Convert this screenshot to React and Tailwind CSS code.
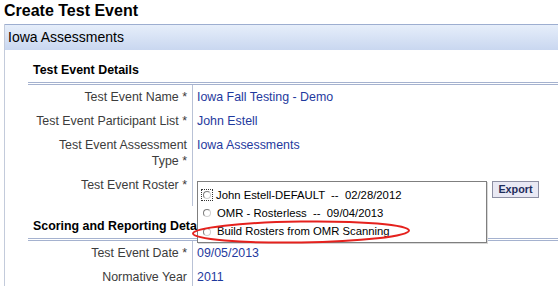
const Row = ({ label, children, valueClass = "" }) => (
  <div className="flex">
    <div className="w-[165px] shrink-0 border-r border-[#b9c2d6] py-1 pr-[5px] text-right leading-4 text-[#3c3c3c]">
      {label}
    </div>
    <div className={"pl-1 py-1 leading-4 text-[#1f3a9e] " + valueClass}>{children}</div>
  </div>
);

const Section = ({ title, children }) => (
  <div>
    <div className="border-b-[3px] border-double border-[#a5b2cf] pb-1 pl-[5px] pt-3 font-bold leading-4 text-black">
      {title}
    </div>
    {children}
  </div>
);

const Radio = ({ focused }) => (
  <span
    className={
      "flex h-[12px] w-[12px] items-center justify-center " +
      (focused ? "border border-dotted border-[#333]" : "")
    }
  >
    <span className="h-[8px] w-[8px] rounded-full border border-t-[#7d7d7d] border-l-[#7d7d7d] border-r-[#d0d0d0] border-b-[#d0d0d0] bg-white" />
  </span>
);

export default function App() {
  return (
    <div className="relative h-[286px] w-[558px] overflow-hidden bg-white font-['Liberation_Sans',Arial,sans-serif] text-[12.4px]">
      <h1 className="h-6 pl-1 pt-[2px] text-[16px] font-bold leading-[18px] text-black">Create Test Event</h1>
      <div className="ml-1 border-l border-[#c3cbdb]">
        <div className="h-[26px] border-t border-[#9daed0] bg-gradient-to-b from-[#e6eefa] to-[#c9d7f0] pl-[3px] text-[14px] leading-[25px] text-black">
          Iowa Assessments
        </div>
        <div className="pl-[23px]">
          <Section title="Test Event Details">
            <Row label="Test Event Name *">Iowa Fall Testing - Demo</Row>
            <Row label="Test Event Participant List *">John Estell</Row>
            <Row label={<>Test Event Assessment<br />Type *</>}>Iowa Assessments</Row>
            <div className="flex h-[33px]">
              <div className="w-[165px] shrink-0 border-r border-[#b9c2d6] py-1 pr-[5px] text-right leading-4 text-[#3c3c3c]">
                Test Event Roster *
              </div>
              <div className="flex items-start gap-[5px] pl-1 pt-2">
                <div className="relative h-[18px] w-[290px]">
                  <div className="absolute left-0 top-0 z-10 h-[62px] w-[290px] border border-[#7f7f7f] bg-white pt-[4px] text-[11.3px] text-black shadow-[1px_1px_0_#d8d8d8]">
                    <div className="flex h-[18px] items-center pl-[3px]">
                      <Radio focused />
                      <span className="ml-[3px] whitespace-pre">John Estell-DEFAULT  --  02/28/2012</span>
                    </div>
                    <div className="flex h-[18px] items-center pl-[3px]">
                      <Radio />
                      <span className="ml-[4px] whitespace-pre">OMR - Rosterless  --  09/04/2013</span>
                    </div>
                    <div className="flex h-[19px] items-center pl-[3px]">
                      <Radio />
                      <span className="ml-[4px] whitespace-pre">Build Rosters from OMR Scanning</span>
                    </div>
                  </div>
                </div>
                <button className="h-[17px] w-[47px] border border-[#8d8fa3] bg-[#e9e9f4] text-[10.8px] font-bold leading-[15px] text-[#1f2d5c]">
                  Export
                </button>
              </div>
            </div>
          </Section>
          <Section title="Scoring and Reporting Details">
            <Row label="Test Event Date *">09/05/2013</Row>
            <Row label="Normative Year">2011</Row>
          </Section>
        </div>
      </div>
      <svg className="absolute left-[189px] top-[218px] z-20" width="224" height="28" viewBox="0 0 224 28">
        <ellipse cx="112" cy="14" rx="108" ry="10.5" fill="none" stroke="#e5211d" strokeWidth="2" transform="rotate(-0.8 112 14)" />
      </svg>
    </div>
  );
}
